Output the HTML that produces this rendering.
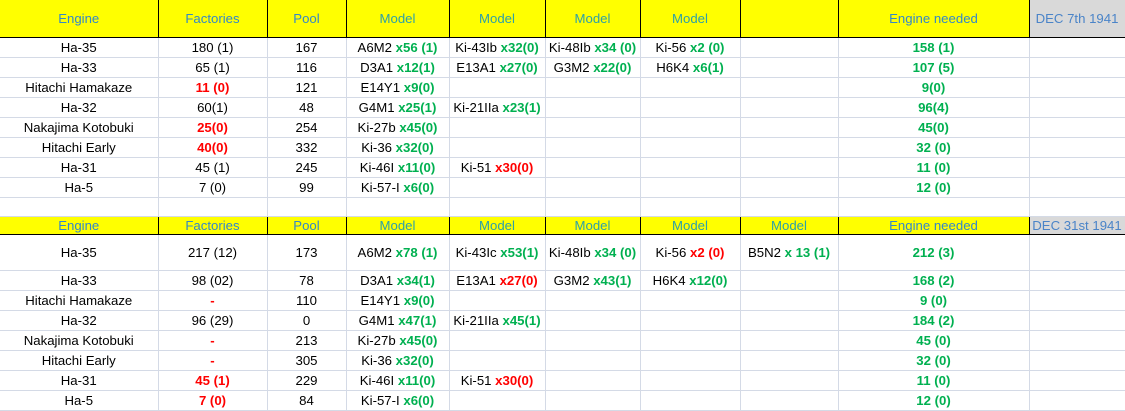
<!DOCTYPE html>
<html><head><meta charset="utf-8"><style>
body{margin:0;background:#fff;width:1125px;height:411px;overflow:hidden}
table{border-collapse:collapse;table-layout:fixed;width:1125px;font-family:"Liberation Sans",sans-serif;font-size:13.2px;color:#000}
td{border:1px solid #d4dae6;text-align:center;padding:0;white-space:nowrap;overflow:hidden}
tr.h td{background:#ffff00;border:1px solid #000;border-top:none;color:#3488c8}
tr.h td.m{color:#2ea0a8}
tr.h td.d{background:#d9d9d9;color:#4a84c8}
tr.h2 td{border-top:1px solid #000}
.g{color:#00b050;font-weight:bold}
.r{color:#ff0000;font-weight:bold}
tr td:first-child{border-left:none}
</style></head><body>
<table>
<colgroup><col style="width:158px"><col style="width:109px"><col style="width:79px"><col style="width:103px"><col style="width:96px"><col style="width:95px"><col style="width:100px"><col style="width:98px"><col style="width:191px"><col style="width:96px"></colgroup>
<tr class="h" style="height:37px"><td>Engine</td><td>Factories</td><td>Pool</td><td class="m">Model</td><td class="m">Model</td><td class="m">Model</td><td class="m">Model</td><td></td><td>Engine needed</td><td class="d">DEC 7th 1941</td></tr>
<tr style="height:20px"><td>Ha-35</td><td>180 (1)</td><td>167</td><td>A6M2 <span class="g">x56 (1)</span></td><td>Ki-43Ib <span class="g">x32(0)</span></td><td>Ki-48Ib <span class="g">x34 (0)</span></td><td>Ki-56 <span class="g">x2 (0)</span></td><td></td><td class="g">158 (1)</td><td></td></tr>
<tr style="height:20px"><td>Ha-33</td><td>65 (1)</td><td>116</td><td>D3A1 <span class="g">x12(1)</span></td><td>E13A1 <span class="g">x27(0)</span></td><td>G3M2 <span class="g">x22(0)</span></td><td>H6K4 <span class="g">x6(1)</span></td><td></td><td class="g">107 (5)</td><td></td></tr>
<tr style="height:20px"><td>Hitachi Hamakaze</td><td class="r">11 (0)</td><td>121</td><td>E14Y1 <span class="g">x9(0)</span></td><td></td><td></td><td></td><td></td><td class="g">9(0)</td><td></td></tr>
<tr style="height:20px"><td>Ha-32</td><td>60(1)</td><td>48</td><td>G4M1 <span class="g">x25(1)</span></td><td>Ki-21IIa <span class="g">x23(1)</span></td><td></td><td></td><td></td><td class="g">96(4)</td><td></td></tr>
<tr style="height:20px"><td>Nakajima Kotobuki</td><td class="r">25(0)</td><td>254</td><td>Ki-27b <span class="g">x45(0)</span></td><td></td><td></td><td></td><td></td><td class="g">45(0)</td><td></td></tr>
<tr style="height:20px"><td>Hitachi Early</td><td class="r">40(0)</td><td>332</td><td>Ki-36 <span class="g">x32(0)</span></td><td></td><td></td><td></td><td></td><td class="g">32 (0)</td><td></td></tr>
<tr style="height:20px"><td>Ha-31</td><td>45 (1)</td><td>245</td><td>Ki-46I <span class="g">x11(0)</span></td><td>Ki-51 <span class="r">x30(0)</span></td><td></td><td></td><td></td><td class="g">11 (0)</td><td></td></tr>
<tr style="height:20px"><td>Ha-5</td><td>7 (0)</td><td>99</td><td>Ki-57-I <span class="g">x6(0)</span></td><td></td><td></td><td></td><td></td><td class="g">12 (0)</td><td></td></tr>
<tr style="height:19px"><td></td><td></td><td></td><td></td><td></td><td></td><td></td><td></td><td></td><td></td></tr>
<tr class="h h2" style="height:18px"><td>Engine</td><td>Factories</td><td>Pool</td><td class="m">Model</td><td class="m">Model</td><td class="m">Model</td><td class="m">Model</td><td class="m">Model</td><td>Engine needed</td><td class="d">DEC 31st 1941</td></tr>
<tr style="height:36px"><td>Ha-35</td><td>217 (12)</td><td>173</td><td>A6M2 <span class="g">x78 (1)</span></td><td>Ki-43Ic <span class="g">x53(1)</span></td><td>Ki-48Ib <span class="g">x34 (0)</span></td><td>Ki-56 <span class="r">x2 (0)</span></td><td>B5N2 <span class="g">x 13 (1)</span></td><td class="g">212 (3)</td><td></td></tr>
<tr style="height:20px"><td>Ha-33</td><td>98 (02)</td><td>78</td><td>D3A1 <span class="g">x34(1)</span></td><td>E13A1 <span class="r">x27(0)</span></td><td>G3M2 <span class="g">x43(1)</span></td><td>H6K4 <span class="g">x12(0)</span></td><td></td><td class="g">168 (2)</td><td></td></tr>
<tr style="height:20px"><td>Hitachi Hamakaze</td><td class="r">-</td><td>110</td><td>E14Y1 <span class="g">x9(0)</span></td><td></td><td></td><td></td><td></td><td class="g">9 (0)</td><td></td></tr>
<tr style="height:20px"><td>Ha-32</td><td>96 (29)</td><td>0</td><td>G4M1 <span class="g">x47(1)</span></td><td>Ki-21IIa <span class="g">x45(1)</span></td><td></td><td></td><td></td><td class="g">184 (2)</td><td></td></tr>
<tr style="height:20px"><td>Nakajima Kotobuki</td><td class="r">-</td><td>213</td><td>Ki-27b <span class="g">x45(0)</span></td><td></td><td></td><td></td><td></td><td class="g">45 (0)</td><td></td></tr>
<tr style="height:20px"><td>Hitachi Early</td><td class="r">-</td><td>305</td><td>Ki-36 <span class="g">x32(0)</span></td><td></td><td></td><td></td><td></td><td class="g">32 (0)</td><td></td></tr>
<tr style="height:20px"><td>Ha-31</td><td class="r">45 (1)</td><td>229</td><td>Ki-46I <span class="g">x11(0)</span></td><td>Ki-51 <span class="r">x30(0)</span></td><td></td><td></td><td></td><td class="g">11 (0)</td><td></td></tr>
<tr style="height:20px"><td>Ha-5</td><td class="r">7 (0)</td><td>84</td><td>Ki-57-I <span class="g">x6(0)</span></td><td></td><td></td><td></td><td></td><td class="g">12 (0)</td><td></td></tr>
</table>
</body></html>
